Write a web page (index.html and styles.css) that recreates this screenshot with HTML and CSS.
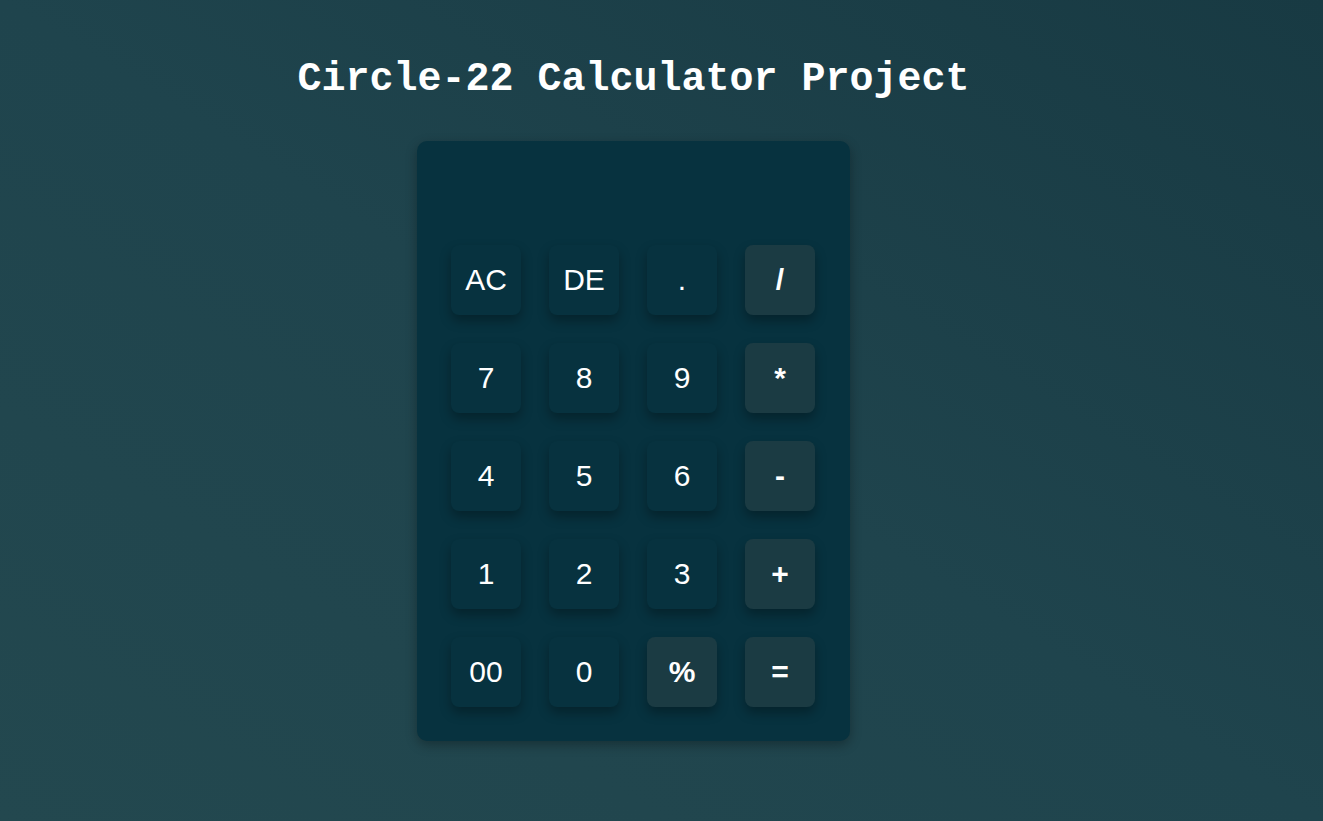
FILE: index.html
```html
<!DOCTYPE html>
<html lang="en">
<head>
<meta charset="utf-8">
<title>Circle-22 Calculator Project</title>
<link rel="stylesheet" href="styles.css">
</head>
<body>
<main class="page">
  <h1 class="title">Circle-22 Calculator Project</h1>
  <div class="calc">
    <div class="display"></div>
    <div class="keys">
      <button class="key">AC</button>
      <button class="key">DE</button>
      <button class="key">.</button>
      <button class="key op">/</button>
      <button class="key">7</button>
      <button class="key">8</button>
      <button class="key">9</button>
      <button class="key op">*</button>
      <button class="key">4</button>
      <button class="key">5</button>
      <button class="key">6</button>
      <button class="key op">-</button>
      <button class="key">1</button>
      <button class="key">2</button>
      <button class="key">3</button>
      <button class="key op">+</button>
      <button class="key">00</button>
      <button class="key">0</button>
      <button class="key op">%</button>
      <button class="key op">=</button>
    </div>
  </div>
</main>
</body>
</html>
```
FILE: styles.css
```css
html, body {
  margin: 0;
  padding: 0;
  height: 100%;
}
body {
  background: linear-gradient(to bottom left, #183a43 0%, #1f444d 50%, #23484f 100%);
  background-attachment: fixed;
  min-height: 821px;
  font-family: "Liberation Sans", Arial, sans-serif;
}
.page {
  width: 1267px;
  display: flex;
  flex-direction: column;
  align-items: center;
  padding-top: 56px;
}
.title {
  margin: 0 0 37px 0;
  font-family: "Liberation Mono", "Courier New", monospace;
  font-weight: bold;
  font-size: 40px;
  line-height: 48px;
  color: #ffffff;
}
.calc {
  width: 433px;
  height: 600px;
  box-sizing: border-box;
  background: #07323f;
  border-radius: 10px;
  box-shadow: 0 4px 12px rgba(0, 0, 0, 0.3);
  padding: 0 35px 34px 34px;
  display: flex;
  flex-direction: column;
}
.display {
  height: 104px;
}
.keys {
  display: grid;
  grid-template-columns: repeat(4, 70px);
  grid-auto-rows: 70px;
  gap: 28px;
}
.key {
  border: none;
  margin: 0;
  padding: 0;
  border-radius: 8px;
  background: #07323f;
  color: #ffffff;
  font-family: "Liberation Sans", Arial, sans-serif;
  font-size: 30px;
  box-shadow: 0 6px 12px rgba(0, 0, 0, 0.3);
  display: flex;
  align-items: center;
  justify-content: center;
}
.key.op {
  background: #1b3b43;
  font-weight: bold;
}
```
